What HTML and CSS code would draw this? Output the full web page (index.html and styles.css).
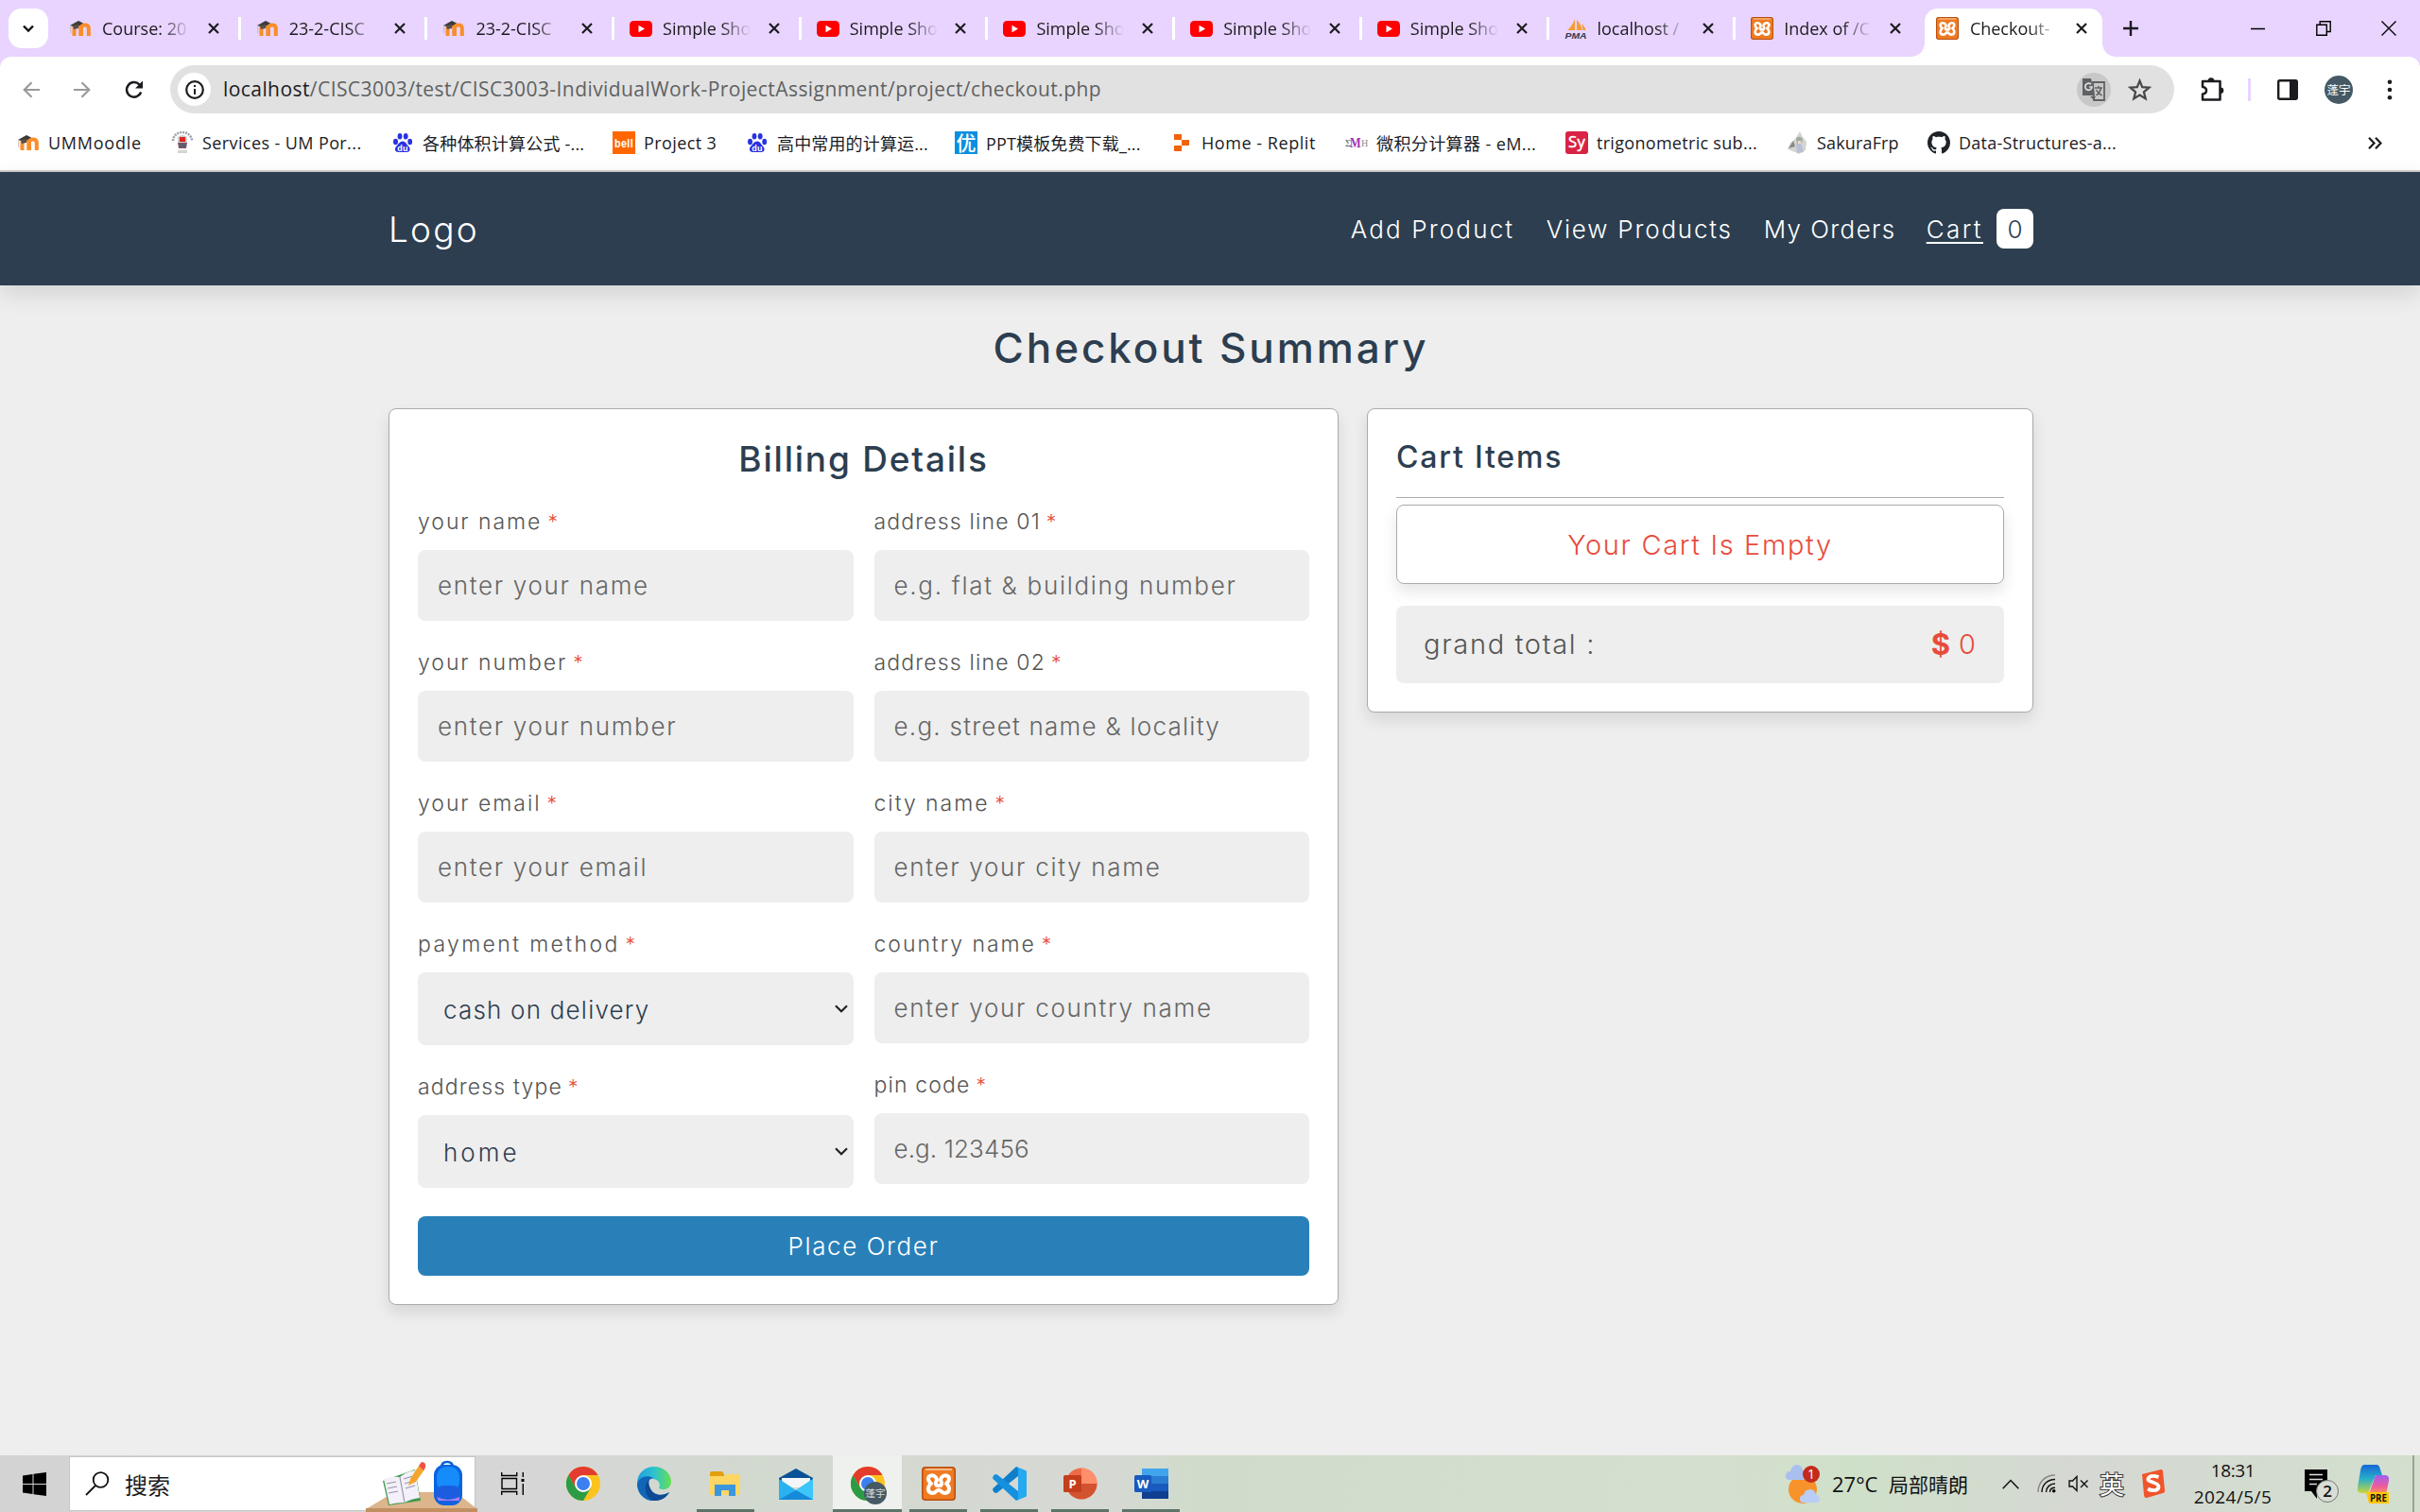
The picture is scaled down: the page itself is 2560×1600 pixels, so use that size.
FILE: index.html
```html
<!DOCTYPE html>
<html lang="zh-CN">
<head>
<meta charset="utf-8">
<title>Checkout</title>
<link rel="stylesheet" href="styles.css">
</head>
<body>
<svg class="defs" width="0" height="0" aria-hidden="true">
  <symbol id="i-x" viewBox="0 0 12 12"><path d="M1 1l10 10M11 1L1 11" fill="none" stroke="currentColor" stroke-width="2.2"/></symbol>
  <symbol id="i-moodle" viewBox="0 0 24 24"><path d="M5.500 20v-8.500q0-3 3.200-3t3.600 3V20M13 20v-8.500q0-3 3.800-3t4 3V20" fill="none" stroke="#f98d2b" stroke-width="4"/><path d="M1 9L10 4l5 2.500L8 11z" fill="#3d3b3b"/><path d="M4 9l6-1v4l-5 1z" fill="#55504c"/><path d="M1.800 9v8" stroke="#c9b9a8" stroke-width="1"/></symbol>
  <symbol id="i-yt" viewBox="0 0 24 24"><rect y="4" width="24" height="17" rx="4.500" fill="#f00"/><path d="M9.500 8.700v7.600l6.500-3.800z" fill="#fff"/></symbol>
  <symbol id="i-xampp" viewBox="0 0 36 36"><rect width="36" height="36" rx="4" fill="#b9500f"/><rect x="1.500" y="1.500" width="33" height="33" rx="3" fill="#ee7a22"/><path d="M4 3h28" stroke="#f6b98a" stroke-width="2"/><path d="M15 11.500C12 8 7 9 7 13c0 2.500 1.500 3.500 3 5-2 1.500-3 3-3 5.500 0 5 6 5.500 8.500 2.500 1.500-1.500 3.500-1.500 5 0 2.500 3 8.500 2.500 8.500-2.500 0-2.500-1-4-3-5.500 1.500-1.500 3-2.500 3-5 0-4-5-5-8-1.500-1 1.500-1.500 2.500-.5 4 1 1.500 1 3.500-.5 4.500M15 11.500c1 1.500 1.500 2.500.5 4-1 1.500-1 3.500.5 4.500M16 20h4" fill="none" stroke="#fff" stroke-width="4" stroke-linejoin="round" stroke-linecap="round"/></symbol>
  <symbol id="i-baidu" viewBox="0 0 24 24"><g fill="#2932e1"><ellipse cx="4.500" cy="11" rx="2.500" ry="3.200"/><ellipse cx="9" cy="5.200" rx="2.400" ry="3.300"/><ellipse cx="15.200" cy="5.200" rx="2.400" ry="3.300"/><ellipse cx="19.700" cy="11" rx="2.400" ry="3.200"/><path d="M12 10.500c3 0 4 3 6 5 3 3 1.500 6.500-1.500 6.500h-9c-3.500 0-5-3.500-2-6.500 2-2 3.500-5 6.500-5z"/></g><text x="12" y="20.500" text-anchor="middle" font-size="9" font-weight="700" fill="#fff" font-family="Liberation Sans">du</text></symbol>
  <symbol id="i-chrome" viewBox="0 0 36 36"><circle cx="18" cy="18" r="18" fill="#fcc31e"/><path d="M2.400 9A18 18 0 0 1 33.600 9H18l-7.800 13.500z" fill="#e33b2e"/><path d="M2.400 9A18 18 0 0 0 18 36l7.800-13.500-15.600 0z" fill="#2c9b45"/><circle cx="18" cy="18" r="9" fill="#fff"/><circle cx="18" cy="18" r="7" fill="#3b7ff0"/></symbol>
</svg>

<div class="tabstrip">
  <button class="tab-menu"><svg width="14" height="9" viewBox="0 0 14 9"><path d="M2 1.500l5 5 5-5" fill="none" stroke="#111" stroke-width="2.400"/></svg></button>
  <div class="tabs">
    <div class="tab"><svg class="fav"><use href="#i-moodle"/></svg><span class="tab-title">Course: 20</span><svg class="close"><use href="#i-x"/></svg></div>
    <div class="tab"><svg class="fav"><use href="#i-moodle"/></svg><span class="tab-title">23-2-CISC</span><svg class="close"><use href="#i-x"/></svg></div>
    <div class="tab"><svg class="fav"><use href="#i-moodle"/></svg><span class="tab-title">23-2-CISC</span><svg class="close"><use href="#i-x"/></svg></div>
    <div class="tab"><svg class="fav"><use href="#i-yt"/></svg><span class="tab-title">Simple Sho</span><svg class="close"><use href="#i-x"/></svg></div>
    <div class="tab"><svg class="fav"><use href="#i-yt"/></svg><span class="tab-title">Simple Sho</span><svg class="close"><use href="#i-x"/></svg></div>
    <div class="tab"><svg class="fav"><use href="#i-yt"/></svg><span class="tab-title">Simple Sho</span><svg class="close"><use href="#i-x"/></svg></div>
    <div class="tab"><svg class="fav"><use href="#i-yt"/></svg><span class="tab-title">Simple Sho</span><svg class="close"><use href="#i-x"/></svg></div>
    <div class="tab"><svg class="fav"><use href="#i-yt"/></svg><span class="tab-title">Simple Sho</span><svg class="close"><use href="#i-x"/></svg></div>
    <div class="tab"><svg class="fav" viewBox="0 0 24 24"><path d="M11 2v12H3q5-4 8-12zM13 3q5 5 5.500 11H13zM18 7q4 4 4.500 7h-3z" fill="#f89c32"/><text x="12" y="22.500" text-anchor="middle" font-size="9.500" font-weight="700" font-style="italic" textLength="23" lengthAdjust="spacingAndGlyphs" fill="#33384f" font-family="Liberation Sans">PMA</text></svg><span class="tab-title">localhost /</span><svg class="close"><use href="#i-x"/></svg></div>
    <div class="tab tab-last"><svg class="fav"><use href="#i-xampp"/></svg><span class="tab-title">Index of /C</span><svg class="close"><use href="#i-x"/></svg></div>
    <div class="tab tab-active"><svg class="fav"><use href="#i-xampp"/></svg><span class="tab-title">Checkout-</span><svg class="close"><use href="#i-x"/></svg></div>
  </div>
  <svg class="new-tab" width="16" height="16" viewBox="0 0 16 16"><path d="M8 0v16M0 8h16" stroke="#1c1b1f" stroke-width="2.400"/></svg>
  <div class="win-buttons">
    <svg width="16" height="16" viewBox="0 0 16 16"><path d="M0 8.500h15" stroke="#000" stroke-width="1.500"/></svg>
    <svg width="16" height="16" viewBox="0 0 16 16"><path d="M.8 4.200h10.500v11H.8zM4.200 4V.8h11v10.700h-4" fill="none" stroke="#000" stroke-width="1.400"/></svg>
    <svg width="16" height="16" viewBox="0 0 16 16"><path d="M.5.500l15 15M15.500.500l-15 15" stroke="#000" stroke-width="1.400"/></svg>
  </div>
</div>

<div class="chrome-bar">
  <div class="toolbar">
    <div class="nav-icons">
      <svg width="18" height="18" viewBox="0 0 18 18"><path d="M18 9H2M9.500 1.200L1.700 9l7.800 7.800" fill="none" stroke="#9a9a9a" stroke-width="2.200"/></svg>
      <svg width="18" height="18" viewBox="0 0 18 18"><path d="M0 9h16M8.500 1.200L16.300 9l-7.800 7.800" fill="none" stroke="#9a9a9a" stroke-width="2.200"/></svg>
      <svg width="20" height="20" viewBox="0 0 20 20"><path d="M17.200 12.500A7.800 7.800 0 1 1 15.500 4.500l2 2" fill="none" stroke="#1c1b1f" stroke-width="2.500"/><path d="M19 .5v8h-8z" fill="#1c1b1f"/></svg>
    </div>
    <div class="omnibox">
      <span class="site-info"><svg width="20" height="20" viewBox="0 0 20 20"><circle cx="10" cy="10" r="8.800" fill="none" stroke="#1c1b1f" stroke-width="2.200"/><path d="M10 9v6M10 5v2" stroke="#1c1b1f" stroke-width="2"/></svg></span>
      <span class="url"><span class="host">localhost</span>/CISC3003/test/CISC3003-IndividualWork-ProjectAssignment/project/checkout.php</span>
      <span class="translate"><svg width="26" height="26" viewBox="0 0 26 26"><path d="M12 5h12v19H13z" fill="none" stroke="#5f6163" stroke-width="1.800"/><path d="M1 1h9l4 18H1z" fill="#5f6163"/><path d="M10 7.200A3.600 3.600 0 1 0 11 10H8" fill="none" stroke="#ddd" stroke-width="1.700"/><path d="M14 11h8M18 9v2M20.500 11q-1 5-5 8M15.500 13q2 4 6 6" fill="none" stroke="#5f6163" stroke-width="1.500"/><path d="M9 20h6l-2 4z" fill="#5f6163"/></svg></span>
      <svg class="star" width="25" height="24" viewBox="0 0 25 24"><path d="M12.500 2.500l2.700 6.700 7.200.5-5.500 4.600 1.800 7.100-6.200-3.900-6.200 3.900 1.800-7.100-5.500-4.600 7.200-.5z" fill="none" stroke="#454749" stroke-width="2.200"/></svg>
    </div>
    <div class="tool-icons">
      <svg width="26" height="26" viewBox="0 0 26 26"><path d="M3 4h18.500v19.500H3v-6q4-.5 4-3.700T3 10z" fill="none" stroke="#1c1b1f" stroke-width="2.500" stroke-linejoin="round"/><path d="M8.500 4a3.500 3.800 0 0 1 7 0zM22 10.500a3.300 3.300 0 0 1 0 6.600z" fill="#1c1b1f"/></svg>
      <i class="tool-sep"></i>
      <svg width="22" height="22" viewBox="0 0 22 22"><rect x="1.200" y="1.200" width="19.600" height="19.600" rx="1.500" fill="none" stroke="#1c1b1f" stroke-width="2.400"/><path d="M13 1h8v20h-8z" fill="#1c1b1f"/></svg>
      <span class="avatar">蓬宇</span>
      <svg width="6" height="22" viewBox="0 0 6 22"><g fill="#1c1b1f"><circle cx="3" cy="2.700" r="2.300"/><circle cx="3" cy="11" r="2.300"/><circle cx="3" cy="19.300" r="2.300"/></g></svg>
    </div>
  </div>
  <div class="bookmarks">
    <span class="bm bm-moodle"><svg class="fav"><use href="#i-moodle"/></svg><span>UMMoodle</span></span>
    <span class="bm bm-um"><svg class="fav" viewBox="0 0 24 24"><path d="M2 10a10 9 0 0 1 20 0" fill="none" stroke="#9aa0a4" stroke-width="2.500" stroke-dasharray="2 1"/><path d="M7 6q5-4 10 0v6q-5 9-10 0z" fill="#c8ccd0"/><path d="M9 6h6v5H9z" fill="#e0231c"/><path d="M7 12h10l-1 6H8z" fill="#8a5660"/><path d="M9 13h6v4H9z" fill="#5a5f75"/><path d="M7 20h10v3H7z" fill="#d8d3d3"/></svg><span>Services - UM Por...</span></span>
    <span class="bm bm-volume"><svg class="fav"><use href="#i-baidu"/></svg><span>各种体积计算公式 -...</span></span>
    <span class="bm bm-bell"><svg class="fav" viewBox="0 0 24 24"><path d="M0 0h24v24H0z" fill="#f60"/><text x="12" y="17" text-anchor="middle" font-size="13" font-weight="700" textLength="20" lengthAdjust="spacingAndGlyphs" fill="#fff" font-family="Liberation Sans">bell</text></svg><span>Project 3</span></span>
    <span class="bm bm-school"><svg class="fav"><use href="#i-baidu"/></svg><span>高中常用的计算运...</span></span>
    <span class="bm bm-ppt"><svg class="fav" viewBox="0 0 24 24"><path d="M0 0h24v24H0z" fill="#0a8fe0"/><text x="12" y="19.500" text-anchor="middle" font-size="21" font-weight="500" fill="#fff" font-family="Noto Sans CJK SC">优</text></svg><span>PPT模板免费下载_...</span></span>
    <span class="bm bm-replit"><svg class="fav" viewBox="0 0 24 24"><path d="M4 3h8v6H4zM12 9h8v6h-8zM4 15h8v6H4z" fill="#f26207"/></svg><span>Home - Replit</span></span>
    <span class="bm bm-emath"><svg class="fav" viewBox="0 0 24 24"><text x="0" y="16" font-size="11" fill="#666" font-family="Liberation Serif">Σ</text><text x="5" y="17" font-size="14" font-weight="700" textLength="12" lengthAdjust="spacingAndGlyphs" fill="#a22fb5" font-family="Liberation Serif">M</text><text x="17" y="16" font-size="10" fill="#888" font-family="Liberation Serif">H</text></svg><span>微积分计算器 - eM...</span></span>
    <span class="bm bm-sy"><svg class="fav" viewBox="0 0 24 24"><rect width="24" height="24" rx="3" fill="#d92344"/><text x="12" y="17" text-anchor="middle" font-size="16" textLength="18" lengthAdjust="spacingAndGlyphs" fill="#fff" stroke="#fff" stroke-width=".5" font-family="Open Sans">Sy</text></svg><span>trigonometric sub...</span></span>
    <span class="bm bm-sakura"><svg class="fav" viewBox="0 0 24 24"><path d="M15 0l3 6 4 5-1 9-7 4-4-2-8-3 3-7 6-5z" fill="#d3d5d1"/><path d="M11 7q4-3 7 1l-1 4-5 1z" fill="#9fab9f"/><path d="M11 13l5-1 3 10-7 1z" fill="#b9bfd6"/><path d="M3 18l5-8 2 6z" fill="#8d8781"/><path d="M13 10h3v3h-3z" fill="#f1dccf"/></svg><span>SakuraFrp</span></span>
    <span class="bm bm-github"><svg class="fav" viewBox="0 0 16 16"><path fill="#1f2328" d="M8 0C3.580 0 0 3.580 0 8c0 3.540 2.290 6.530 5.470 7.590.4.070.55-.17.55-.38 0-.19-.01-.82-.01-1.490-2.010.37-2.530-.49-2.690-.94-.09-.23-.48-.94-.82-1.130-.28-.15-.68-.52-.01-.53.63-.01 1.080.58 1.230.82.72 1.210 1.870.87 2.330.66.07-.52.28-.87.51-1.070-1.780-.2-3.640-.89-3.640-3.950 0-.87.31-1.590.82-2.150-.08-.2-.36-1.020.08-2.120 0 0 .67-.21 2.200.82.64-.18 1.320-.27 2-.27s1.360.09 2 .27c1.530-1.040 2.200-.82 2.200-.82.44 1.100.16 1.920.08 2.120.51.56.82 1.270.82 2.150 0 3.070-1.870 3.750-3.650 3.950.29.25.54.73.54 1.480 0 1.070-.01 1.930-.01 2.200 0 .21.15.46.55.38A8.010 8.010 0 0 0 16 8c0-4.420-3.580-8-8-8z"/></svg><span>Data-Structures-a...</span></span>
    <svg class="more" width="15" height="13" viewBox="0 0 15 13"><path d="M1 .8l5.500 5.700L1 12.200M8 .8l5.500 5.700L8 12.200" fill="none" stroke="#1c1b1f" stroke-width="2.200"/></svg>
  </div>
</div>

<main class="page">
  <header class="site-header">
    <div class="container header-row">
      <a class="logo">Logo</a>
      <nav class="site-nav">
        <a class="nav-add">Add Product</a>
        <a class="nav-view">View Products</a>
        <a class="nav-orders">My Orders</a>
        <span class="cart-link"><a class="underlined">Cart</a><span class="badge">0</span></span>
      </nav>
    </div>
  </header>
  <section class="container">
    <h1>Checkout Summary</h1>
    <div class="columns">
      <form class="card billing">
        <h2>Billing Details</h2>
        <div class="form-cols">
          <div class="form-col">
            <div class="field"><label>your name<b>*</b></label><input placeholder="enter your name"></div>
            <div class="field"><label>your number<b>*</b></label><input placeholder="enter your number"></div>
            <div class="field"><label>your email<b>*</b></label><input placeholder="enter your email"></div>
            <div class="field"><label class="wide">payment method<b>*</b></label><div class="select"><span>cash on delivery</span><svg width="14" height="9" viewBox="0 0 14 9"><path d="M1 1.200l6 6 6-6" fill="none" stroke="#222" stroke-width="2.200"/></svg></div></div>
            <div class="field"><label class="tight">address type<b>*</b></label><div class="select"><span class="home">home</span><svg width="14" height="9" viewBox="0 0 14 9"><path d="M1 1.200l6 6 6-6" fill="none" stroke="#222" stroke-width="2.200"/></svg></div></div>
          </div>
          <div class="form-col">
            <div class="field"><label class="tight">address line 01<b>*</b></label><input placeholder="e.g. flat &amp; building number"></div>
            <div class="field"><label class="tight">address line 02<b>*</b></label><input class="street" placeholder="e.g. street name &amp; locality"></div>
            <div class="field"><label>city name<b>*</b></label><input placeholder="enter your city name"></div>
            <div class="field"><label>country name<b>*</b></label><input placeholder="enter your country name"></div>
            <div class="field"><label class="tight">pin code<b>*</b></label><input class="pin" placeholder="e.g. 123456"></div>
          </div>
        </div>
        <button type="button" class="order">Place Order</button>
      </form>
      <aside class="card cart">
        <h3>Cart Items</h3>
        <p class="empty">Your Cart Is Empty</p>
        <div class="total"><span class="total-label">grand total :</span><span class="price"><strong>$</strong>0</span></div>
      </aside>
    </div>
  </section>
</main>

<footer class="taskbar">
  <div class="start"><svg width="25" height="25" viewBox="0 0 25 25"><path d="M0 3.500L10.500 2v10H0zM11.500 1.800L25 0v12H11.500zM0 13h10.500v10L0 21.500zM11.500 13H25v12l-13.500-1.800z" fill="#000"/></svg></div>
  <div class="search">
    <svg class="glass" width="26" height="26" viewBox="0 0 26 26"><circle cx="16.500" cy="9" r="7.800" fill="none" stroke="#111" stroke-width="1.800"/><path d="M11 15L1 25" stroke="#111" stroke-width="1.800"/></svg>
    <span class="search-label">搜索</span>
    <svg class="deco" width="118" height="56" viewBox="0 0 118 56"><path d="M30 35h65l23 18H0z" fill="#dcb58c"/><path d="M0 52h118v4H0z" fill="#c08f62"/><path d="M18 23l34-12 6 33-34 5z" fill="#3f9a4e"/><path d="M19 21q9-3 17-2 7-6 16-7l5 29q-9 1-16 5-8 0-16 2z" fill="#f3f0fa"/><path d="M36 19l5 27M22 26l10-2M23 31l10-2M24 36l10-2M40 21l10-3M41 26l10-3M42 31l10-3" stroke="#9a97ab" stroke-width="1.200"/><path d="M45 28l2-7 9-14 6 4-9 13z" fill="#f5a52d"/><path d="M56 7l3-4q5 0 4 6l-2 3z" fill="#ee5245"/><path d="M80 9q0-6 6-6t6 6" fill="none" stroke="#0a62d8" stroke-width="2.500"/><rect x="72" y="6" width="30" height="43" rx="11" fill="#0b63e0"/><rect x="75" y="8" width="24" height="26" rx="10" fill="#168cfb"/><rect x="74" y="28" width="26" height="18" rx="8" fill="#1c5de0"/><path d="M75 40q12 6 24 0v4H77z" fill="#a583f4"/></svg>
  </div>
  <div class="apps">
    <div class="app"><svg width="25" height="24" viewBox="0 0 25 24"><path d="M.7 0v3.500h16V0M.7 24v-3.500h16V24M1 6.500h15.500v11H1zM23.300 0v5M23.300 12v12" fill="none" stroke="#000" stroke-width="1.400"/><path d="M21.500 7h3v3h-3z"/></svg></div>
    <div class="app"><svg width="36" height="36"><use href="#i-chrome"/></svg></div>
    <div class="app"><svg width="36" height="36" viewBox="0 0 36 36"><defs><linearGradient id="eg" x1="0" x2="1"><stop offset="0" stop-color="#1f9fe0"/><stop offset=".5" stop-color="#2dc3cf"/><stop offset="1" stop-color="#66e04f"/></linearGradient></defs><path d="M0 18C0 7 8 0 18 0s18 7 18 16c0 7-7 10-13 7 2-3 1-9-6-10-8-1-14 3-17 8z" fill="url(#eg)"/><path d="M0 19c1-8 11-11 17-7-6 1-8 9-3 14 4 5 13 6 20 1-5 9-14 10-20 9C5 34 0 26 0 19z" fill="#1266b8"/><path d="M13 14c-8 6-4 19 4 22 7 0 13-2 17-9-8 5-17 3-20-4-2-4-2-7-1-9z" fill="#0e4a94"/></svg></div>
    <div class="app app-open"><svg width="32" height="27" viewBox="0 0 32 27"><path d="M0 2q0-2 2-2h11l2 3v2H0z" fill="#e0a010"/><path d="M0 5h15l2-2h15v22H0z" fill="#fdd663"/><path d="M5 26V14h22v12h-7v-6h-8v6z" fill="#3b96dd"/></svg></div>
    <div class="app"><svg width="36" height="33" viewBox="0 0 36 33"><path d="M0 10L18 0l18 10v4H0z" fill="#0a5298"/><path d="M3 10h30v10H3z" fill="#f4f6fa"/><path d="M0 11l18 12 18-12v22H0z" fill="#2ab2f0"/><path d="M36 11v22L18 23z" fill="#3cc6fa"/><path d="M0 33l18-10 18 10z" fill="#148ad8"/></svg></div>
    <div class="app app-open app-current"><svg width="36" height="36"><use href="#i-chrome"/></svg><span class="profile">蓬宇</span></div>
    <div class="app app-open"><svg width="36" height="36"><use href="#i-xampp"/></svg></div>
    <div class="app app-open"><svg width="36" height="36" viewBox="0 0 36 36"><path d="M25 0l2 1v9L5 27.500q-2 1-3.500-.5l-1-1.500q-1-1.500.5-3z" fill="#0f7fca"/><path d="M25 36l2-1v-9L5 8.500Q3 7.500 1.500 9l-1 1.500q-1 1.500.5 3z" fill="#1590de"/><path d="M25 36q2-.5 2-3V3q0-2.500-2-3l10 4q1 .5 1 2v24q0 1.500-1 2z" fill="#25a9f0"/></svg></div>
    <div class="app app-open"><svg width="36" height="34" viewBox="0 0 36 34"><circle cx="19" cy="17" r="16.500" fill="#ed6c47"/><path d="M19 .5A16.500 16.500 0 0 1 35.500 17H19z" fill="#ff8f6b"/><path d="M19 17h16.500A16.500 16.500 0 0 1 6 27z" fill="#d35230"/><rect y="8" width="19" height="18" rx="1.500" fill="#c43e1c"/><text x="9.500" y="21.500" text-anchor="middle" font-size="13" font-weight="700" fill="#fff" font-family="Open Sans">P</text></svg></div>
    <div class="app app-open"><svg width="36" height="34" viewBox="0 0 36 34"><rect x="8" y="1" width="28" height="32" rx="1.500" fill="#2b7cd3"/><path d="M8 1h28v8H8z" fill="#41a5ee"/><path d="M8 17h28v8H8z" fill="#185abd"/><path d="M8 25h28v8H8z" fill="#103f91"/><rect y="8" width="18" height="18" rx="1.500" fill="#185abd"/><text x="9" y="21.500" text-anchor="middle" font-size="13" font-weight="700" fill="#fff" font-family="Open Sans">W</text></svg></div>
  </div>
  <div class="tray">
    <svg class="t-weather" width="38" height="44" viewBox="0 0 38 44"><circle cx="18" cy="28" r="15" fill="#f7932a"/><path d="M3 18q-3-1-3-4 0-5 5-5 2-8 8-7 4 1 5 6 5 0 5 5t-5 5z" fill="#a9bff0"/><path d="M18 42q-3 0-3-4t4-4q1-6 7-6 5 0 6 6 4 0 4 4t-4 4z" fill="#b9cdf6"/><circle cx="27" cy="12" r="9" fill="#c42b1c"/><text x="27" y="17" text-anchor="middle" font-size="14" fill="#fff" font-family="Open Sans">1</text></svg>
    <span class="t-temp">27°C</span><span class="t-cond">局部晴朗</span>
    <svg class="t-caret" width="18" height="11" viewBox="0 0 18 11"><path d="M.7 10.300L9 1.500l8.300 8.800" fill="none" stroke="#111" stroke-width="1.500"/></svg>
    <svg class="t-wifi" width="20" height="20" viewBox="0 0 20 20"><g fill="none" stroke="#111" stroke-width="1.400"><path d="M1 19C1 8 9 1 19 1" stroke="#888"/><path d="M5 19C5 11 11 5.500 19 5.500M9.500 19c0-5 4-9 9.500-9M13.500 19c0-3 2-4.700 5.500-4.700"/></g><circle cx="17.700" cy="17.700" r="1.800"/></svg>
    <svg class="t-vol" width="22" height="18" viewBox="0 0 22 18"><path d="M1 6h3.500L9 1.500v15L4.500 12H1zM13 5.500l7.500 7.500M20.500 5.500L13 13" fill="none" stroke="#111" stroke-width="1.400"/></svg>
    <span class="t-ime">英</span>
    <svg class="t-sogou" width="26" height="30" viewBox="0 0 26 30"><path d="M1 5l20-5q2 0 2 2l2 20q0 3-2 3L6 30q-3 0-3-3z" fill="#f0552b"/><path d="M18.500 8q-9-3-11 1.500C6 14 19 13 18.500 18.500c-.5 4.500-7 4.500-11.500 2" fill="none" stroke="#fff" stroke-width="3.800"/></svg>
    <div class="clock"><span class="time">18:31</span><span class="date">2024/5/5</span></div>
    <div class="notif"><svg width="24" height="31" viewBox="0 0 24 31"><path d="M0 0h24v23H13v8l-6-8H0z"/><path d="M5 5.500h14M5 10.500h14M5 15.500h8" stroke="#ddd" stroke-width="1.500"/></svg><span>2</span></div>
    <svg class="t-copilot" width="34" height="42" viewBox="0 0 34 42"><defs><linearGradient id="ca" x1="0" y1="0" x2="0" y2="1"><stop offset="0" stop-color="#1667d8"/><stop offset=".5" stop-color="#28b0c8"/><stop offset="1" stop-color="#c9d53c"/></linearGradient><linearGradient id="cb" x1="0" y1="0" x2="0" y2="1"><stop offset="0" stop-color="#a05df0"/><stop offset=".6" stop-color="#ee5c9c"/><stop offset="1" stop-color="#fb9a4b"/></linearGradient></defs><path d="M7 1h13q3 0 4 5l2 6h-7L11 31H4q-5 0-4-6L3 7q1-6 4-6z" fill="url(#ca)"/><path d="M20 12h9q5 0 4 6l-2 10q-1 4-5 4H12l5-14q1-6 3-6z" fill="url(#cb)"/><path d="M9 30h24v12H12z" fill="#ffc60a"/><text x="22" y="39.500" text-anchor="middle" font-size="10" font-weight="700" textLength="18" lengthAdjust="spacingAndGlyphs" fill="#111" font-family="Open Sans">PRE</text></svg>
    <i class="peek"></i>
  </div>
</footer>
</body>
</html>
```
FILE: styles.css
```css
* { box-sizing: border-box; }
body { margin: 0; width: 2560px; height: 1600px; overflow: hidden; display: flex; flex-direction: column; font-family: "Open Sans", "Noto Sans CJK SC", sans-serif; background: #eee; color: #1c1b1f; }
svg { flex: none; display: block; }
.defs { position: absolute; }

/* Browser tab strip */
.tabstrip { height: 60px; flex: none; background: #e8d4ff; display: flex; align-items: center; padding-left: 9px; }
.tab-menu { width: 42px; height: 42px; border: 0; border-radius: 14px; background: #fff; display: grid; place-items: center; padding: 0; }
.tabs { display: flex; align-self: stretch; margin-left: 6px; }
.tab { width: 197.700px; height: 60px; display: flex; align-items: center; padding-left: 16px; position: relative; font-size: 18px; }
.tab::after { content: ""; width: 3px; height: 24px; background: #fff; margin-left: 20px; }
.tab-last::after, .tab-active::after { display: none; }
.fav { width: 24px; height: 24px; flex: none; }
.tab-title { width: 98px; margin-left: 11px; white-space: nowrap; -webkit-mask-image: linear-gradient(90deg, #000 62px, transparent 93px); mask-image: linear-gradient(90deg, #000 62px, transparent 93px); }
.close { width: 12px; height: 12px; margin-left: 14px; color: #1c1b1f; }
.tab-active { background: #fff; width: 188px; height: 51px; align-self: flex-end; margin: 0 5px 0 2px; padding: 0 0 9px 12px; border-radius: 14px 14px 0 0; }
.tab-active .tab-title { margin-left: 12px; }
.tab-active::before { content: ""; position: absolute; left: -14px; right: -14px; bottom: 0; height: 14px; background: radial-gradient(circle at 0 0, transparent 13.500px, #fff 14px) left / 14px 14px no-repeat, radial-gradient(circle at 100% 0, transparent 13.500px, #fff 14px) right / 14px 14px no-repeat; }
.new-tab { margin-left: 17px; }
.win-buttons { margin-left: auto; display: flex; gap: 53px; padding-right: 25px; }

/* Toolbar and bookmarks */
.chrome-bar { height: 122px; flex: none; background: #fff; border-bottom: 2px solid #cfcfcf; border-radius: 12px 12px 0 0; box-shadow: 0 -14px 0 #e8d4ff; }
.tabstrip { position: relative; z-index: 1; }
.toolbar { display: flex; align-items: center; height: 69px; }
.nav-icons { display: flex; align-items: center; gap: 36px; width: 180px; padding-left: 24px; }
.omnibox { width: 2120px; height: 51px; border-radius: 26px; background: #e1e1e1; display: flex; align-items: center; padding-left: 8px; }
.site-info { width: 35px; height: 35px; border-radius: 50%; background: #fff; display: grid; place-items: center; }
.url { margin-left: 13px; font-size: 21px; letter-spacing: .43px; color: #5f6163; flex: 1; white-space: nowrap; line-height: 30px; padding-bottom: 1px; }
.host { color: #1c1b1f; }
.translate { width: 36px; height: 36px; border-radius: 50%; background: #c8c8c8; display: grid; place-items: center; margin-right: 18px; }
.star { margin-right: 24px; }
.tool-icons { display: flex; align-items: center; margin-left: 27px; }
.tool-sep { width: 3px; height: 24px; background: #e8d4ff; margin: 0 28px 0 25px; }
.avatar { width: 30px; height: 30px; border-radius: 50%; background: #455a64; color: #fff; font: 12.500px/30px "Noto Sans CJK TC", sans-serif; text-align: center; margin: 0 36px 0 28px; }
.bookmarks { display: flex; align-items: center; gap: 31px; height: 44px; padding: 0 40px 0 18px; font-size: 18px; }
.bm { display: flex; align-items: center; gap: 9px; white-space: nowrap; flex: none; letter-spacing: .4px; }
.bm-moodle { width: 132px; letter-spacing: .75px; }
.bm-um { width: 202px; }
.bm-volume { width: 203px; letter-spacing: .2px; }
.bm-bell { width: 110px; }
.bm-school { width: 190px; letter-spacing: .15px; }
.bm-ppt { width: 197px; letter-spacing: .15px; }
.bm-replit { width: 154px; letter-spacing: .55px; }
.bm-emath { width: 202px; }
.bm-sy { width: 202px; letter-spacing: .3px; }
.bm-sakura { width: 119px; letter-spacing: .15px; }
.bm-github { width: 199px; letter-spacing: .25px; }
.more { margin-left: auto; }

/* Shop page */
.page { flex: 1; font-family: Inter, sans-serif; font-weight: 300; }
.container { width: 1740px; margin: 0 auto 0 411px; }
.site-header { height: 120px; background: #2c3e50; box-shadow: 0 8px 24px rgba(0,0,0,.12); color: #fff; }
.header-row { display: flex; align-items: center; justify-content: space-between; height: 120px; }
.logo { font-size: 37px; letter-spacing: 2.200px; }
.site-nav { display: flex; align-items: center; font-size: 26px; white-space: nowrap; }
.nav-add { width: 207px; letter-spacing: 2.150px; }
.nav-view { width: 230px; letter-spacing: 1.800px; }
.nav-orders { width: 172px; letter-spacing: 1.400px; }
.cart-link { display: flex; align-items: center; gap: 14px; }
.underlined { letter-spacing: 2.400px; text-decoration: underline; text-underline-offset: 4px; text-decoration-thickness: 2px; }
.badge { width: 39px; height: 42px; border-radius: 8px; background: #fff; color: #2c3e50; display: grid; place-items: center; }
h1, h2, h3, p { margin: 0; font-weight: 400; color: #2c3e50; }
h1 { font-size: 44px; line-height: 60px; padding: 36px 0 34px; text-align: center; letter-spacing: 2.900px; font-weight: 450; }
.columns { display: flex; align-items: flex-start; justify-content: space-between; }
.card { background: #fff; border: 1.500px solid #aaa; border-radius: 8px; padding: 30px; box-shadow: 0 8px 16px rgba(0,0,0,.1); }
.billing { width: 1005px; height: 949px; }
.billing h2 { font-size: 37px; line-height: 46px; text-align: center; margin-bottom: 25px; letter-spacing: 1.800px; font-weight: 450; }
.form-cols { display: flex; justify-content: space-between; }
.form-col { width: 460.500px; display: flex; flex-direction: column; gap: 26.400px; }
label { display: block; height: 36px; line-height: 37px; margin-bottom: 12px; font-size: 23px; letter-spacing: 1.950px; color: #555; }
label.wide { letter-spacing: 2.350px; }
label.tight { letter-spacing: 1.150px; }
label b { color: #e74c3c; font-weight: 300; font-size: 21px; margin-left: 6px; }
input { display: block; width: 100%; height: 74.700px; border: 0; border-radius: 8px; background: #eee; padding: 0 21px; font: 300 26px Inter, sans-serif; letter-spacing: 1.700px; color: #2c3e50; }
input::placeholder { color: #666; }
.street { letter-spacing: 1.250px; }
.pin { letter-spacing: .1px; }
.select { display: flex; align-items: center; justify-content: space-between; height: 76.700px; border-radius: 8px; background: #eee; padding: 0 6px 0 27px; font-size: 26px; letter-spacing: 1.200px; color: #2c3e50; }
.select span { padding-top: 2px; }
.select .home { letter-spacing: 3px; }
.order { display: block; width: 100%; height: 63px; margin-top: 30px; border: 0; border-radius: 8px; background: #2980b9; color: #fff; font: 300 26px Inter, sans-serif; letter-spacing: 1.600px; }
.cart { width: 705px; height: 322px; }
.cart h3 { font-size: 32px; line-height: 42px; height: 64px; border-bottom: 1.500px solid #aaa; letter-spacing: 1.800px; font-weight: 450; }
.empty { margin-top: 7px; height: 84px; line-height: 83px; border: 1.500px solid #aaa; border-radius: 8px; text-align: center; font-size: 29px; letter-spacing: 1.650px; color: #e74c3c; box-shadow: 0 8px 16px rgba(0,0,0,.1); font-weight: 300; }
.total { margin-top: 23px; height: 82px; border-radius: 8px; background: #eee; display: flex; align-items: center; justify-content: space-between; padding: 0 30px 2px 29px; font-size: 29px; color: #555; }
.total-label { letter-spacing: 1.700px; }
.price { color: #e74c3c; display: flex; gap: 9px; }
.price strong { font-weight: 700; font-size: 31px; line-height: 35px; }

/* Windows taskbar */
.taskbar { height: 60px; flex: none; display: flex; background: linear-gradient(90deg, #d3d3d3 0, #d6d6d6 560px, #d2d9cf 800px, #d6d8d4 1150px, #d0dccb 1270px, #d5dfd0 1800px, #cfe0c9 1960px, #d5d8d3 2200px, #d3dccf 2420px, #d3e0ce 2560px); }
.start { width: 73px; display: flex; align-items: center; padding: 1px 0 0 24px; }
.search { width: 430px; height: 58px; margin-top: 1px; background: #fff; border: 1px solid #c6c6c6; display: flex; align-items: center; padding-left: 16px; }
.search-label { font-size: 24px; margin-left: 16px; }
.deco { margin: 3px -3px 0 auto; }
.apps { display: flex; margin-left: 1.500px; }
.app { width: 75.100px; height: 60px; display: grid; place-items: center; position: relative; }
.app-open { background: linear-gradient(#5c7368, #5c7368) center bottom / 61px 3px no-repeat; }
.app-current { background: linear-gradient(#5c7368, #5c7368) center bottom / 73px 3px no-repeat, linear-gradient(#eef1ed, #eef1ed) center / 73px 60px no-repeat; }
.profile { position: absolute; left: 34px; top: 28px; width: 24px; height: 24px; border-radius: 50%; background: #455a64; color: #d5dadd; font: 10.500px/24px "Noto Sans CJK TC", sans-serif; text-align: center; }
.tray { margin-left: auto; display: flex; align-items: center; color: #111; }
.t-temp { font-size: 22px; margin-left: 11px; width: 60px; }
.t-cond { font-size: 21px; width: 84px; }
.t-caret { margin-left: 36px; }
.t-wifi { margin-left: 19px; }
.t-vol { margin-left: 13px; }
.t-ime { font: 26px/30px "Noto Sans CJK SC", sans-serif; margin-left: 11px; color: #fff; -webkit-text-stroke: 2px #333; paint-order: stroke fill; }
.t-sogou { margin-left: 18px; }
.clock { width: 84px; margin-left: 29px; display: flex; flex-direction: column; align-items: center; font-size: 19px; line-height: 28px; }
.time { letter-spacing: -.4px; }
.date { letter-spacing: .4px; }
.notif { position: relative; width: 36px; margin-left: 34px; }
.notif span { position: absolute; left: 12px; top: 11px; width: 24px; height: 24px; border: 1px solid #777; border-radius: 50%; background: #d8ddd5; font-size: 17px; font-weight: 600; line-height: 22px; text-align: center; }
.t-copilot { margin-left: 20px; }
.peek { width: 2px; height: 60px; background: #9aa598; margin: 0 6px 0 24px; }
```
